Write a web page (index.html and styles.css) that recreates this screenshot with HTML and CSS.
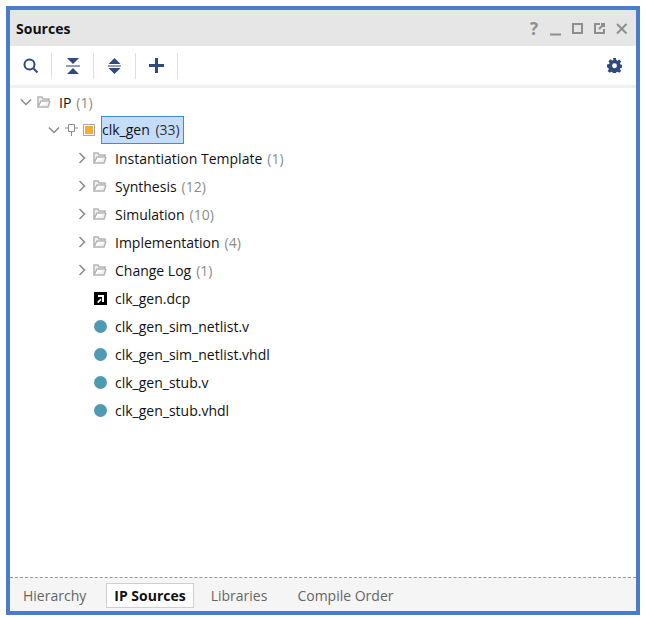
FILE: index.html
```html
<!DOCTYPE html>
<html lang="en">

<head>
    <meta charset="UTF-8" />
    <title>Sources</title>
    <link rel="stylesheet" href="styles.css">
</head>

<body>
    <div class="panel">
        <div class="titlebar">
            <span class="title">Sources</span>
            <div class="win-icons">
                <span class="help">?</span>
                <svg width="14" height="14" viewBox="0 0 14 14"><path d="M1 12.500h11" class="win" /></svg>
                <svg width="14" height="14" viewBox="0 0 14 14"><rect x="2" y="2" width="9" height="9" class="win" /></svg>
                <svg width="14" height="14" viewBox="0 0 14 14"><path d="M7 2H2v9h9V7M6 7l5-5M8 2h3v3" class="win" /></svg>
                <svg width="14" height="14" viewBox="0 0 14 14"><path d="M2 2l9.500 9.500M11.500 2L2 11.500" class="win" /></svg>
            </div>
        </div>

        <div class="toolbar">
            <button class="tool">
                <svg width="16" height="16" viewBox="0 0 16 16"><circle cx="6.500" cy="6.500" r="5" class="ico-line" /><path d="M10.500 10.500l4 4" class="ico-line" /></svg>
            </button>
            <button class="tool">
                <svg width="14" height="16" viewBox="0 0 14 16"><path d="M1 0h12L7 6zM1 16h12L7 10z" class="ico" /><path d="M0 7h14v2H0z" class="ico-light" /></svg>
            </button>
            <button class="tool">
                <svg width="13" height="16" viewBox="0 0 13 16"><path d="M6.500 0l6 6H.5zM6.500 16l6-6H.5z" class="ico" /><path d="M0 7h13v2H0z" class="ico-light" /></svg>
            </button>
            <button class="tool">
                <svg width="15" height="15" viewBox="0 0 15 15"><path d="M6 0h3v6h6v3H9v6H6V9H0V6h6z" class="ico" /></svg>
            </button>
            <svg class="gear" width="15" height="15" viewBox="0 0 16 16"><path d="M6.500 0h3l.4 2.200 1.300.6L13.100 1.500l2 2.200-1.300 1.800.5 1.300 2.200.4v3l-2.200.4-.5 1.300 1.300 1.900-2.100 2-1.900-1.200-1.300.5-.4 2.200h-3l-.4-2.200-1.300-.5-1.800 1.200-2.200-2 1.300-1.900-.6-1.300L0 9.900v-3l2.200-.4.600-1.300L1.500 3.400l2.200-2 1.900 1.200 1.300-.5z" class="ico" /><circle cx="8" cy="8.200" r="2.600" fill="#fff" /></svg>
        </div>

        <div class="tree">
            <div class="row">
                <svg class="chev" width="12" height="12" viewBox="0 0 12 12"><path d="M1 3.500l5 5 5-5" /></svg>
                <svg class="folder" width="14" height="12" viewBox="0 0 14 12"><path d="M1 11V1h4l1 2h6v2H4l-3 6h10l2-6" /></svg>
                <span class="name">IP</span><span class="count">(1)</span>
            </div>
            <div class="row lvl-1">
                <svg class="chev" width="12" height="12" viewBox="0 0 12 12"><path d="M1 3.500l5 5 5-5" /></svg>
                <svg class="chip" width="13" height="14" viewBox="0 0 13 14"><path d="M3.500 1.500h6v7h-6zM6.500 8.500V13M0 5h3.500M9.500 5H13" /></svg>
                <span class="ip-box"><i></i></span>
                <span class="selected">clk_gen <span class="sel-count">(33)</span></span>
            </div>
            <div class="row lvl-2">
                <svg class="chev" width="12" height="12" viewBox="0 0 12 12"><path d="M3.500 1l5 5-5 5" /></svg>
                <svg class="folder" width="14" height="12" viewBox="0 0 14 12"><path d="M1 11V1h4l1 2h6v2H4l-3 6h10l2-6" /></svg>
                <span class="name">Instantiation Template</span><span class="count">(1)</span>
            </div>
            <div class="row lvl-2">
                <svg class="chev" width="12" height="12" viewBox="0 0 12 12"><path d="M3.500 1l5 5-5 5" /></svg>
                <svg class="folder" width="14" height="12" viewBox="0 0 14 12"><path d="M1 11V1h4l1 2h6v2H4l-3 6h10l2-6" /></svg>
                <span class="name">Synthesis</span><span class="count">(12)</span>
            </div>
            <div class="row lvl-2">
                <svg class="chev" width="12" height="12" viewBox="0 0 12 12"><path d="M3.500 1l5 5-5 5" /></svg>
                <svg class="folder" width="14" height="12" viewBox="0 0 14 12"><path d="M1 11V1h4l1 2h6v2H4l-3 6h10l2-6" /></svg>
                <span class="name">Simulation</span><span class="count">(10)</span>
            </div>
            <div class="row lvl-2">
                <svg class="chev" width="12" height="12" viewBox="0 0 12 12"><path d="M3.500 1l5 5-5 5" /></svg>
                <svg class="folder" width="14" height="12" viewBox="0 0 14 12"><path d="M1 11V1h4l1 2h6v2H4l-3 6h10l2-6" /></svg>
                <span class="name">Implementation</span><span class="count">(4)</span>
            </div>
            <div class="row lvl-2">
                <svg class="chev" width="12" height="12" viewBox="0 0 12 12"><path d="M3.500 1l5 5-5 5" /></svg>
                <svg class="folder" width="14" height="12" viewBox="0 0 14 12"><path d="M1 11V1h4l1 2h6v2H4l-3 6h10l2-6" /></svg>
                <span class="name">Change Log</span><span class="count">(1)</span>
            </div>
            <div class="row lvl-3">
                <svg class="dcp" width="13" height="13" viewBox="0 0 13 13"><rect width="13" height="13" fill="#000" /><path d="M4 3h6v7H8V5H4zM3 10l3.500-3.500 1 1.500L4.500 11z" fill="#fff" /></svg>
                <span class="name">clk_gen.dcp</span>
            </div>
            <div class="row lvl-3"><span class="dot"></span><span class="name">clk_gen_sim_netlist.v</span></div>
            <div class="row lvl-3"><span class="dot"></span><span class="name">clk_gen_sim_netlist.vhdl</span></div>
            <div class="row lvl-3"><span class="dot"></span><span class="name">clk_gen_stub.v</span></div>
            <div class="row lvl-3"><span class="dot"></span><span class="name">clk_gen_stub.vhdl</span></div>
        </div>

        <div class="tabs">
            <span class="tab">Hierarchy</span>
            <span class="tab active">IP Sources</span>
            <span class="tab">Libraries</span>
            <span class="tab">Compile Order</span>
        </div>
    </div>
</body>

</html>
```

FILE: styles.css
```css
/* Panel frame */
body {
    margin: 6px 6px 0;
    background: #fff;
    font-family: "Open Sans", "Noto Sans", sans-serif;
    font-size: 14px;
    color: #222;
}

.panel {
    display: flex;
    flex-direction: column;
    box-sizing: border-box;
    width: 634px;
    height: 609px;
    border: 4px solid #4a7cc9;
    background: #fff;
}

/* Title bar */
.titlebar {
    display: flex;
    align-items: center;
    justify-content: space-between;
    height: 36px;
    padding: 0 7px 0 6px;
    background: #e6e6e6;
}

.title {
    font-weight: 700;
    font-size: 14px;
    color: #111;
}

.win-icons {
    display: flex;
    align-items: center;
    gap: 8px;
    margin-top: 2px;
}

.help {
    width: 14px;
    font-size: 17px;
    font-weight: 700;
    line-height: 14px;
    text-align: center;
    color: #8e8e8e;
}

.win {
    fill: none;
    stroke: #8e8e8e;
    stroke-width: 2;
}

/* Toolbar */
.toolbar {
    display: flex;
    align-items: center;
    height: 39px;
    border-bottom: 3px solid #f0f0f0;
}

.tool {
    display: flex;
    align-items: center;
    justify-content: center;
    width: 42px;
    height: 26px;
    padding: 0;
    border: none;
    border-right: 1px solid #dedede;
    background: none;
}

.ico {
    fill: #2f4a7d;
}

.ico-light {
    fill: #8fa0bf;
}

.ico-line {
    fill: none;
    stroke: #2f4a7d;
    stroke-width: 2;
}

.gear {
    margin-left: auto;
    margin-right: 14px;
}

/* Tree */
.tree {
    flex: 1;
}

.row {
    display: flex;
    align-items: center;
    height: 28px;
    padding-left: 10px;
    white-space: pre;
}

.lvl-1 {
    padding-left: 38px;
}

.lvl-2 {
    padding-left: 66px;
}

.lvl-3 {
    padding-left: 84px;
}

.chev {
    margin-right: 5px;
    flex: none;
}

.chev path {
    fill: none;
    stroke: #8a8a8a;
    stroke-width: 1.500;
}

.folder {
    margin-right: 8px;
    flex: none;
}

.folder path {
    fill: #f2f2f2;
    stroke: #b4b4b4;
    stroke-width: 1.500;
}

.chip {
    margin-right: 5px;
    flex: none;
}

.chip path {
    fill: none;
    stroke: #8a8a8a;
}

.ip-box {
    display: flex;
    align-items: center;
    justify-content: center;
    box-sizing: border-box;
    width: 12px;
    height: 12px;
    margin-right: 6px;
    border: 1px solid #a8a8a8;
}

.ip-box i {
    width: 8px;
    height: 8px;
    background: #f8a93a;
}

.selected {
    box-sizing: border-box;
    width: 83px;
    height: 28px;
    line-height: 26px;
    border: 1px solid #3a8fd0;
    background: #c6dcfb;
    color: #111;
    word-spacing: 2px;
}

.sel-count {
    color: #333;
}

.name {
    color: #111;
}

.count {
    margin-left: 5px;
    color: #8c8c8c;
}

.dcp {
    margin-right: 8px;
    flex: none;
}

.dot {
    flex: none;
    width: 13px;
    height: 13px;
    margin-right: 8px;
    border-radius: 50%;
    background: #4e9ab5;
}

/* Tabs */
.tabs {
    display: flex;
    align-items: center;
    gap: 4px;
    box-sizing: border-box;
    height: 34px;
    padding-top: 1px;
    border-top: 1px dashed #9a9a9a;
    background: #f5f5f5;
}

.tab {
    padding: 2px 12px;
    border: 1px solid transparent;
    color: #666;
}

.active {
    margin-left: 3px;
    padding: 2px 7px;
    border-color: #cfcfcf;
    background: #fff;
    font-weight: 700;
    color: #111;
}
```
